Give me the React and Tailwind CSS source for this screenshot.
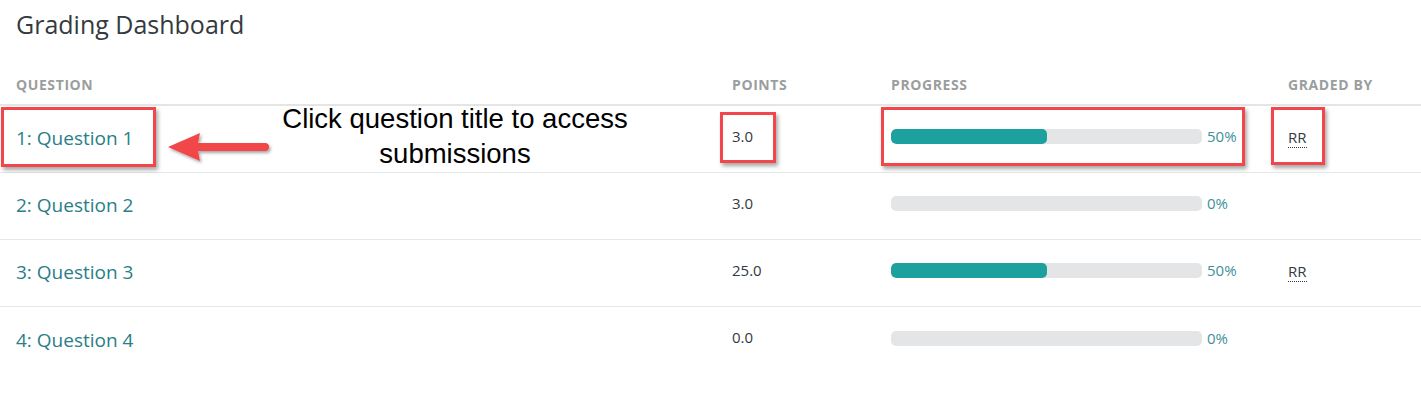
import React from "react";

const rows = [
  { q: "1: Question 1", pts: "3.0", pct: 50, by: "RR" },
  { q: "2: Question 2", pts: "3.0", pct: 0, by: "" },
  { q: "3: Question 3", pts: "25.0", pct: 50, by: "RR" },
  { q: "4: Question 4", pts: "0.0", pct: 0, by: "" },
];

function RedBox({ className }) {
  return (
    <div
      className={
        "absolute border-[3px] border-[#f2464a] shadow-[2px_3px_4px_rgba(0,0,0,0.35)] pointer-events-none " +
        className
      }
    />
  );
}

export default function App() {
  return (
    <div className="relative w-[1421px] h-[417px] bg-white overflow-hidden font-['Open_Sans',sans-serif]">
      <h1 className="pl-4 pt-[9px] text-[25px] leading-[30px] text-[#333a40] font-normal">
        Grading Dashboard
      </h1>

      <div className="mt-[35px]">
        <div className="flex pl-4 h-[32px] items-start text-[14px] font-bold uppercase text-[#9a9e9e] tracking-[0.6px] border-b-2 border-[#e4e6e6]">
          <div className="w-[716px]">Question</div>
          <div className="w-[159px]">Points</div>
          <div className="w-[397px]">Progress</div>
          <div>Graded By</div>
        </div>
        {rows.map((r, i) => (
          <div
            key={i}
            className={
              "flex pl-4 h-[67px] items-center " +
              (i < rows.length - 1 ? "border-b border-[#e6e7e7]" : "")
            }
          >
            <div className="w-[716px] text-[19px] text-[#2a7e88] -mt-[1px]">{r.q}</div>
            <div className="w-[159px] text-[15px] text-[#333a40] -mt-[6px]">{r.pts}</div>
            <div className="w-[397px] flex items-center -mt-[5px]">
              <div className="w-[311px] h-[15px] rounded-[5px] bg-[#e4e5e6] overflow-hidden">
                <div
                  className="h-full rounded-[5px] bg-[#1ca19e]"
                  style={{ width: `${r.pct}%` }}
                />
              </div>
              <span className="ml-[5px] text-[15px] text-[#3f8f9c]">{r.pct}%</span>
            </div>
            <div className="-mt-[5px]">
              {r.by && (
                <span className="text-[15px] text-[#333a40] border-b border-dotted border-[#333a40] leading-[19px] inline-block">
                  {r.by}
                </span>
              )}
            </div>
          </div>
        ))}
      </div>

      {/* Annotations */}
      <RedBox className="left-[1px] top-[107px] w-[155px] h-[60px]" />
      <RedBox className="left-[720px] top-[112px] w-[56px] h-[51px]" />
      <RedBox className="left-[881px] top-[107px] w-[364px] h-[59px]" />
      <RedBox className="left-[1271px] top-[107px] w-[54px] h-[58px]" />

      <svg
        className="absolute left-[164px] top-[130px]"
        width="110"
        height="36"
        viewBox="0 0 110 36"
      >
        <defs>
          <filter id="sh" x="-20%" y="-40%" width="140%" height="180%">
            <feDropShadow dx="1.5" dy="2" stdDeviation="1.5" floodColor="#000" floodOpacity="0.35" />
          </filter>
        </defs>
        <g filter="url(#sh)">
          <path d="M4 17 L36 3 L34 13 L101 13 Q105 13 105 17 Q105 21 101 21 L34 21 L36 31 Z" fill="#f2464a" />
        </g>
      </svg>

      <div className="absolute left-[255px] top-[101px] w-[400px] text-center font-['Liberation_Sans',Arial,sans-serif] text-[27.5px] leading-[35px] text-black">
        Click question title to access
        <br />
        submissions
      </div>
    </div>
  );
}
